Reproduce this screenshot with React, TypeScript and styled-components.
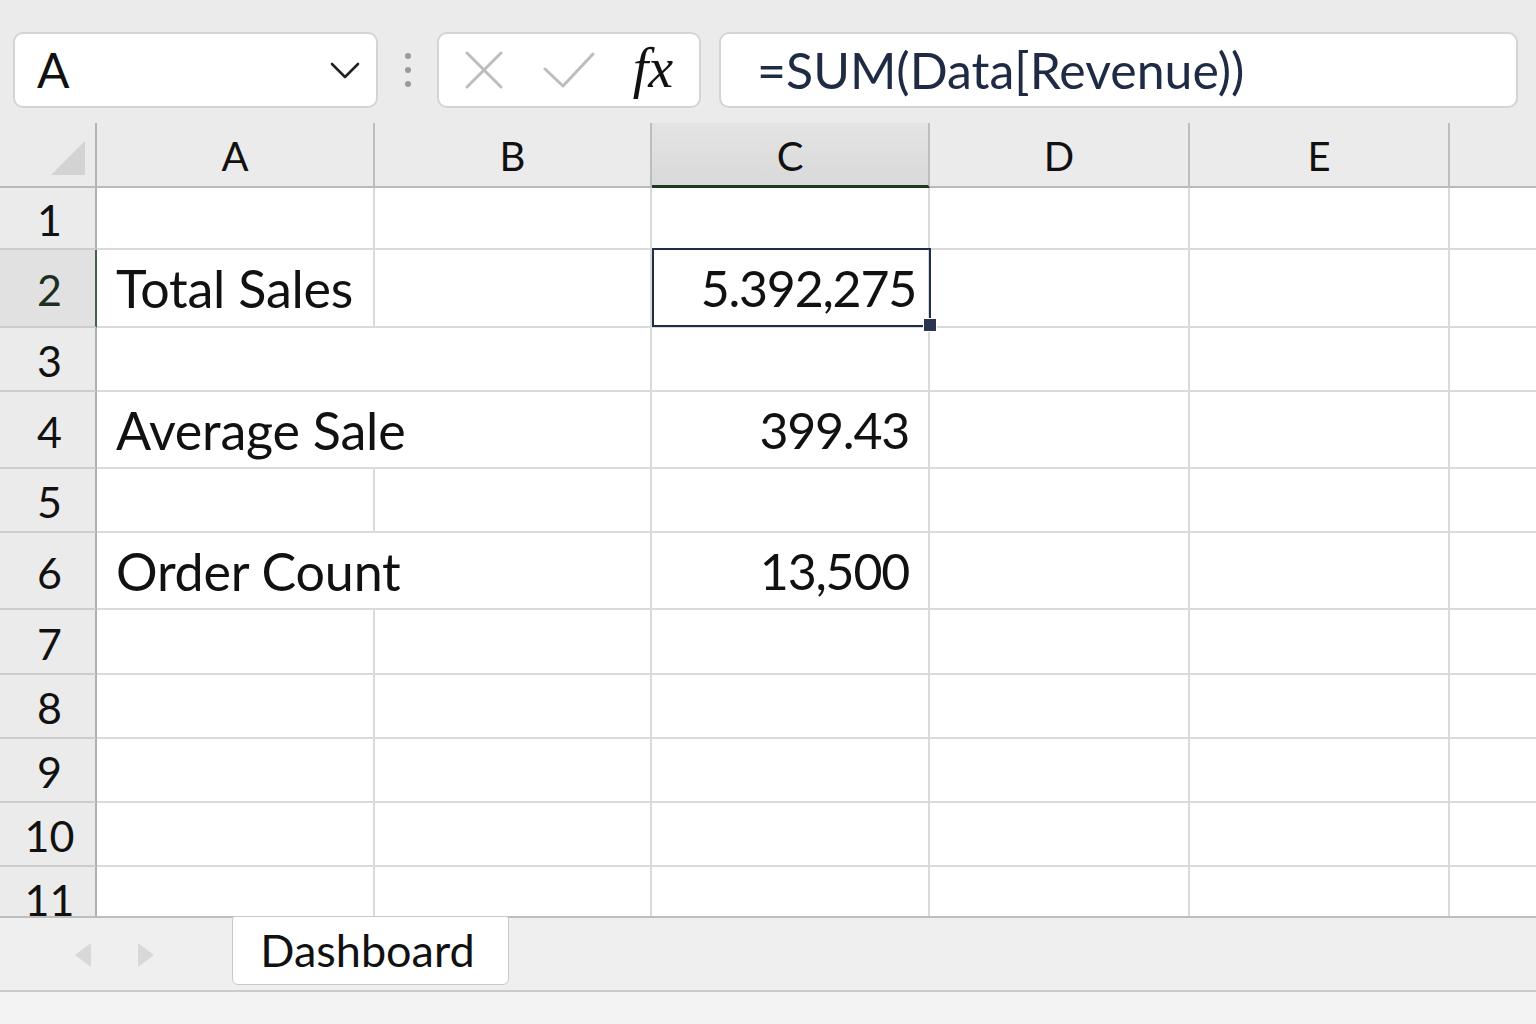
import React from "react";
import styled, { createGlobalStyle } from "styled-components";

const GlobalStyle = createGlobalStyle`
  html, body { margin: 0; padding: 0; }
  body {
    width: 1536px;
    height: 1024px;
    overflow: hidden;
    background: #ebebeb;
    font-family: Lato, "Open Sans", sans-serif;
    color: #111;
  }
  * { box-sizing: border-box; }
`;

const Page = styled.div`
  display: flex;
  flex-direction: column;
  width: 1536px;
  height: 1024px;
`;

const Toolbar = styled.div`
  display: flex;
  align-items: stretch;
  height: 123px;
  padding: 32px 18px 15px 13px;
  background: #ebebeb;
`;

const Box = styled.div`
  background: #fff;
  border: 2px solid #d4d4d4;
  border-radius: 10px;
  display: flex;
  align-items: center;
`;

const NameBox = styled(Box)`
  width: 365px;
  justify-content: space-between;
  padding: 0 16px 0 22px;
`;

const NameText = styled.span`
  font-size: 48px;
  line-height: 1;
  color: #111;
`;

const Separator = styled.div`
  width: 59px;
  display: flex;
  flex-direction: column;
  align-items: center;
  justify-content: center;
  gap: 8px;
`;

const Dot = styled.span`
  width: 6px;
  height: 6px;
  border-radius: 50%;
  background: #9a9a9a;
`;

const ButtonGroup = styled(Box)`
  width: 264px;
  display: grid;
  grid-template-columns: 90px 80px 94px;
  align-items: center;
  justify-items: center;
  margin-right: 18px;
`;

const Fx = styled.span`
  font-family: "Liberation Serif", "DejaVu Serif", serif;
  font-style: italic;
  font-size: 56px;
  line-height: 1;
  color: #111;
  margin-top: -4px;
  margin-right: 6px;
`;

const FormulaBox = styled(Box)`
  flex: 1;
  padding-left: 36px;
`;

const FormulaText = styled.span`
  font-size: 50px;
  line-height: 1;
  color: #1f2a44;
  white-space: nowrap;
`;

const Sheet = styled.div`
  display: grid;
  grid-template-columns: 97px 278px 277px 278px 260px 260px 86px;
  grid-template-rows: 65px 62px 78px 64px 77px 64px 77px 65px 64px 64px 64px 64px;
  height: 793px;
  overflow: hidden;
  background: #fff;
`;

const Corner = styled.div`
  background: #ebebeb;
  border-right: 2px solid #b3b3b3;
  border-bottom: 2px solid #b9b9b9;
  display: flex;
  align-items: flex-end;
  justify-content: flex-end;
  padding: 0 10px 11px 0;
`;

const ColHeader = styled.div<{ $selected?: boolean; $last?: boolean }>`
  background: ${(p) => (p.$selected ? "linear-gradient(#e4e4e4, #d9d9d9)" : "#ebebeb")};
  border-right: ${(p) => (p.$last ? "none" : "2px solid #bdbdbd")};
  border-bottom: ${(p) => (p.$selected ? "3px solid #1c3a20" : "2px solid #b9b9b9")};
  display: flex;
  align-items: center;
  justify-content: center;
  font-size: 40px;
  line-height: 1;
  color: #111;
  padding-top: 3px;
`;

const RowHeader = styled.div<{ $selected?: boolean }>`
  background: ${(p) => (p.$selected ? "#e1e1e1" : "#ebebeb")};
  border-right: 2px solid ${(p) => (p.$selected ? "#3d6444" : "#b0b0b0")};
  border-bottom: 2px solid #cdcdcd;
  display: flex;
  align-items: center;
  justify-content: center;
  padding-left: 4px;
  padding-top: 3px;
  font-size: 43px;
  line-height: 1;
  color: ${(p) => (p.$selected ? "#1b2f1e" : "#111")};
`;

const Cell = styled.div<{ $num?: boolean; $open?: boolean; $selected?: boolean; $last?: boolean }>`
  position: relative;
  border-right: ${(p) => (p.$open || p.$last ? "none" : "2px solid #dadada")};
  border-bottom: 2px solid #dadada;
  display: flex;
  align-items: center;
  justify-content: ${(p) => (p.$num ? "flex-end" : "flex-start")};
  padding: ${(p) => (p.$num ? (p.$selected ? "0 12px 0 0" : "0 19px 0 0") : "0 0 0 19px")};
  font-size: ${(p) => (p.$num ? "50px" : "52px")};
  line-height: 1;
  letter-spacing: ${(p) => (p.$num ? "-1.2px" : "-0.2px")};
  white-space: nowrap;
  color: #111;
  overflow: visible;
  z-index: ${(p) => (p.$selected ? 2 : "auto")};

  ${(p) =>
    p.$selected &&
    `
    &::after {
      content: "";
      position: absolute;
      top: -2px;
      left: 0;
      right: -3px;
      bottom: -1px;
      border: 2.5px solid #1f2d4a;
      pointer-events: none;
    }
    &::before {
      content: "";
      position: absolute;
      right: -9px;
      bottom: -6px;
      width: 12px;
      height: 12px;
      background: #2a3550;
      border: 1px solid #fff;
      z-index: 3;
    }
  `}
`;

const TabBar = styled.div`
  display: flex;
  align-items: flex-start;
  height: 74px;
  border-top: 2px solid #bdbdbd;
  background: #efefef;
  padding-left: 75px;
`;

const NavArrows = styled.div`
  display: flex;
  gap: 47px;
  align-self: center;
  margin-top: 2px;
  margin-right: 78px;
`;

const Tab = styled.div`
  width: 277px;
  height: 69px;
  margin-top: -2px;
  background: #fff;
  border: 1.5px solid #c9c9c9;
  border-radius: 3px 3px 6px 6px;
  display: flex;
  align-items: center;
  justify-content: center;
  padding-right: 6px;
  font-size: 45px;
  line-height: 1;
  color: #111;
`;

const StatusStrip = styled.div`
  flex: 1;
  border-top: 2px solid #cbcbcb;
  background: #f3f3f3;
`;

const Chevron = () => (
  <svg width="30" height="18" viewBox="0 0 30 18">
    <path d="M2 3 L15 16 L28 3" fill="none" stroke="#222" strokeWidth="2.6" strokeLinecap="round" strokeLinejoin="round" />
  </svg>
);

const CrossIcon = () => (
  <svg width="38" height="38" viewBox="0 0 38 38">
    <path d="M2 2 L36 36 M36 2 L2 36" fill="none" stroke="#bdbdbd" strokeWidth="3" strokeLinecap="round" />
  </svg>
);

const CheckIcon = () => (
  <svg width="52" height="36" viewBox="0 0 52 36">
    <path d="M2 17 L20 34 L50 2" fill="none" stroke="#bdbdbd" strokeWidth="3" strokeLinecap="round" strokeLinejoin="round" />
  </svg>
);

const CornerTriangle = () => (
  <svg width="34" height="34" viewBox="0 0 34 34">
    <polygon points="34,0 34,34 0,34" fill="#d3d3d3" />
  </svg>
);

const Arrow = ({ dir }: { dir: "left" | "right" }) => (
  <svg width="16" height="24" viewBox="0 0 16 24">
    <polygon points={dir === "left" ? "16,0 16,24 0,12" : "0,0 0,24 16,12"} fill="#d8d8d8" />
  </svg>
);

type CellData = { text?: string; num?: boolean; open?: boolean; selected?: boolean };

const columns = ["A", "B", "C", "D", "E", ""];

const rows: Record<number, Record<number, CellData>> = {
  2: { 0: { text: "Total Sales" }, 2: { text: "5.392,275", num: true, selected: true } },
  3: { 0: { open: true } },
  4: { 0: { text: "Average Sale", open: true }, 2: { text: "399.43", num: true } },
  6: { 0: { text: "Order Count", open: true }, 2: { text: "13,500", num: true } },
};

export default function App() {
  const rowNums = Array.from({ length: 11 }, (_, i) => i + 1);
  return (
    <Page>
      <GlobalStyle />
      <Toolbar>
        <NameBox>
          <NameText>A</NameText>
          <Chevron />
        </NameBox>
        <Separator>
          <Dot />
          <Dot />
          <Dot />
        </Separator>
        <ButtonGroup>
          <CrossIcon />
          <CheckIcon />
          <Fx>fx</Fx>
        </ButtonGroup>
        <FormulaBox>
          <FormulaText>=SUM(Data[Revenue))</FormulaText>
        </FormulaBox>
      </Toolbar>
      <Sheet>
        <Corner>
          <CornerTriangle />
        </Corner>
        {columns.map((c, i) => (
          <ColHeader key={`h${i}`} $selected={c === "C"} $last={i === columns.length - 1}>
            {c}
          </ColHeader>
        ))}
        {rowNums.map((r) => (
          <React.Fragment key={r}>
            <RowHeader $selected={r === 2}>{r}</RowHeader>
            {columns.map((_, ci) => {
              const d = rows[r]?.[ci] ?? {};
              return (
                <Cell
                  key={`${r}-${ci}`}
                  $num={d.num}
                  $open={d.open}
                  $selected={d.selected}
                  $last={ci === columns.length - 1}
                >
                  {d.text}
                </Cell>
              );
            })}
          </React.Fragment>
        ))}
      </Sheet>
      <TabBar>
        <NavArrows>
          <Arrow dir="left" />
          <Arrow dir="right" />
        </NavArrows>
        <Tab>Dashboard</Tab>
      </TabBar>
      <StatusStrip />
    </Page>
  );
}
